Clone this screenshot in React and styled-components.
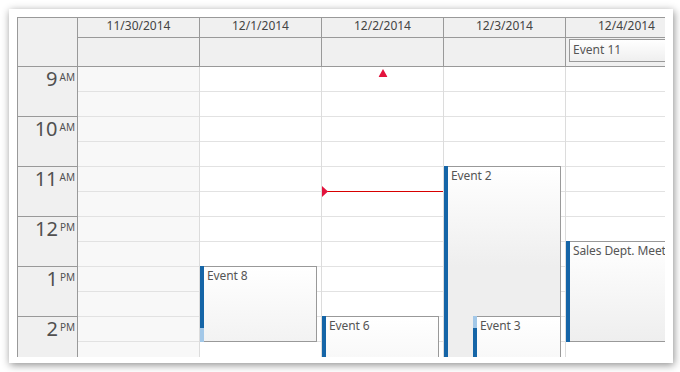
import React from 'react'
import styled, { createGlobalStyle } from 'styled-components'

const GlobalStyle = createGlobalStyle`
  html, body {
    margin: 0;
    padding: 0;
    background: #fff;
  }
  body {
    font-family: "Noto Sans", "DejaVu Sans", sans-serif;
  }
  * {
    box-sizing: border-box;
  }
`

const DARK = '#1565a7'
const LIGHT = '#a3c8e8'

const Page = styled.div`
  width: 680px;
  height: 372px;
  padding: 9px;
`

const Frame = styled.div`
  width: 664px;
  height: 354px;
  padding: 8px 8px 6px;
  background: #fff;
  box-shadow: 1px 2px 8px rgba(0, 0, 0, 0.45);
`

const Calendar = styled.div`
  width: 648px;
  height: 340px;
  overflow: hidden;
  border-left: 1px solid #999;
  border-top: 1px solid #999;
  display: flex;
  flex-direction: column;
`

const HeaderGrid = styled.div`
  flex: none;
  display: grid;
  grid-template-columns: 60px repeat(5, 122px);
  grid-template-rows: 20px 29px;
`

const Corner = styled.div`
  grid-row: 1 / span 2;
  background: #f0f0f0;
  border-right: 1px solid #999;
  border-bottom: 1px solid #999;
`

const DayTitle = styled.div`
  background: #f0f0f0;
  border-right: 1px solid #999;
  border-bottom: 1px solid #999;
  font-size: 12px;
  line-height: 16px;
  color: #444;
  text-align: center;
  white-space: nowrap;
`

const AllDayCell = styled.div`
  background: #f0f0f0;
  border-right: 1px solid #999;
  border-bottom: 1px solid #999;
  padding: 1px 2px 0 3px;
`

const AllDayEvent = styled.div`
  width: 116px;
  height: 23px;
  border: 1px solid #999;
  background: linear-gradient(to bottom, #ffffff, #efefef);
  font-size: 12px;
  line-height: 20px;
  color: #555;
  padding-left: 3px;
  white-space: nowrap;
  overflow: hidden;
`

const Body = styled.div`
  flex: none;
  display: flex;
`

const TimeColumn = styled.div`
  flex: none;
  width: 60px;
  display: flex;
  flex-direction: column;
`

const HourCell = styled.div`
  flex: none;
  height: 50px;
  background: #f0f0f0;
  border-right: 1px solid #999;
  border-bottom: 1px solid #999;
  display: flex;
  justify-content: flex-end;
  align-items: flex-start;
  padding: 2px 2px 0 0;
  color: #505050;
`

const HourNumber = styled.span`
  font-size: 20px;
  line-height: 20px;
`

const HourSuffix = styled.span`
  font-size: 10px;
  line-height: 10px;
  margin: 3px 0 0 2px;
`

const DayColumn = styled.div`
  flex: none;
  width: 122px;
  position: relative;
  background: ${(props) => (props.$weekend ? '#f8f8f8' : '#fff')};
  border-right: 1px solid #dcdcdc;
`

const HalfHour = styled.div`
  height: 25px;
  border-bottom: 1px solid #e2e2e2;
`

const Event = styled.div`
  position: absolute;
  top: ${(props) => props.$top}px;
  left: ${(props) => props.$left || 0}px;
  width: ${(props) => props.$width || 117}px;
  height: ${(props) => props.$height}px;
  display: flex;
  z-index: 2;
`

const EventBar = styled.div`
  flex: none;
  width: 4px;
  background: ${(props) =>
    `linear-gradient(to bottom, ${LIGHT} 0, ${LIGHT} ${props.$from}px, ${DARK} ${props.$from}px, ${DARK} ${props.$to}px, ${LIGHT} ${props.$to}px, ${LIGHT} 100%)`};
`

const EventBody = styled.div`
  flex: 1;
  min-width: 0;
  border: 1px solid #999;
  border-left: none;
  background: linear-gradient(to bottom, #ffffff 0, #eeeeee 100px);
  padding: 1px 0 0 3px;
  font-size: 12px;
  letter-spacing: -0.1px;
  line-height: 16px;
  color: #555;
  white-space: nowrap;
  overflow: hidden;
`

const NowLine = styled.div`
  position: absolute;
  top: 124px;
  left: 0;
  right: 0;
  height: 1px;
  background: #d80000;
  z-index: 1;
`

const NowArrow = styled.svg`
  position: absolute;
  top: 119px;
  left: 0;
  z-index: 1;
`

const MoreAbove = styled.svg`
  position: absolute;
  top: 2px;
  left: 50%;
  transform: translateX(-50%);
  z-index: 1;
`

const days = [
  { label: '11/30/2014', weekend: true },
  { label: '12/1/2014' },
  { label: '12/2/2014' },
  { label: '12/3/2014' },
  { label: '12/4/2014' },
]

const hours = [
  ['9', 'AM'],
  ['10', 'AM'],
  ['11', 'AM'],
  ['12', 'PM'],
  ['1', 'PM'],
  ['2', 'PM'],
]

// top/height in px from 9 AM, 50px per hour; from/to = dark part of the duration bar
const events = {
  1: [{ text: 'Event 8', top: 199, height: 76, from: 0, to: 62 }],
  2: [{ text: 'Event 6', top: 249, height: 52, from: 0, to: 999 }],
  3: [
    { text: 'Event 2', top: 99, height: 202, from: 0, to: 999 },
    { text: 'Event 3', top: 249, height: 52, left: 29, width: 88, from: 12, to: 999 },
  ],
  4: [{ text: 'Sales Dept. Meeting', top: 174, height: 101, from: 0, to: 999 }],
}

const CalendarEvent = ({ ev }) => (
  <Event $top={ev.top} $height={ev.height} $left={ev.left} $width={ev.width}>
    <EventBar $from={ev.from} $to={ev.to} />
    <EventBody>{ev.text}</EventBody>
  </Event>
)

export default function App() {
  return (
    <Page>
      <GlobalStyle />
      <Frame>
        <Calendar>
          <HeaderGrid>
            <Corner />
            {days.map((d) => (
              <DayTitle key={d.label}>{d.label}</DayTitle>
            ))}
            {days.map((d, i) => (
              <AllDayCell key={d.label}>
                {i === 4 && <AllDayEvent>Event 11</AllDayEvent>}
              </AllDayCell>
            ))}
          </HeaderGrid>
          <Body>
            <TimeColumn>
              {hours.map(([h, s]) => (
                <HourCell key={h}>
                  <HourNumber>{h}</HourNumber>
                  <HourSuffix>{s}</HourSuffix>
                </HourCell>
              ))}
            </TimeColumn>
            {days.map((d, i) => (
              <DayColumn key={d.label} $weekend={d.weekend}>
                {Array.from({ length: hours.length * 2 }).map((_, k) => (
                  <HalfHour key={k} />
                ))}
                {(events[i] || []).map((ev) => (
                  <CalendarEvent key={ev.text} ev={ev} />
                ))}
                {i === 2 && (
                  <>
                    <MoreAbove width="9" height="8" viewBox="0 0 9 8">
                      <polygon points="4.5,0 9,8 0,8" fill="#e3133d" />
                    </MoreAbove>
                    <NowLine />
                    <NowArrow width="6" height="11" viewBox="0 0 6 11">
                      <polygon points="0,0 6,5.5 0,11" fill="#e3133d" />
                    </NowArrow>
                  </>
                )}
              </DayColumn>
            ))}
          </Body>
        </Calendar>
      </Frame>
    </Page>
  )
}
